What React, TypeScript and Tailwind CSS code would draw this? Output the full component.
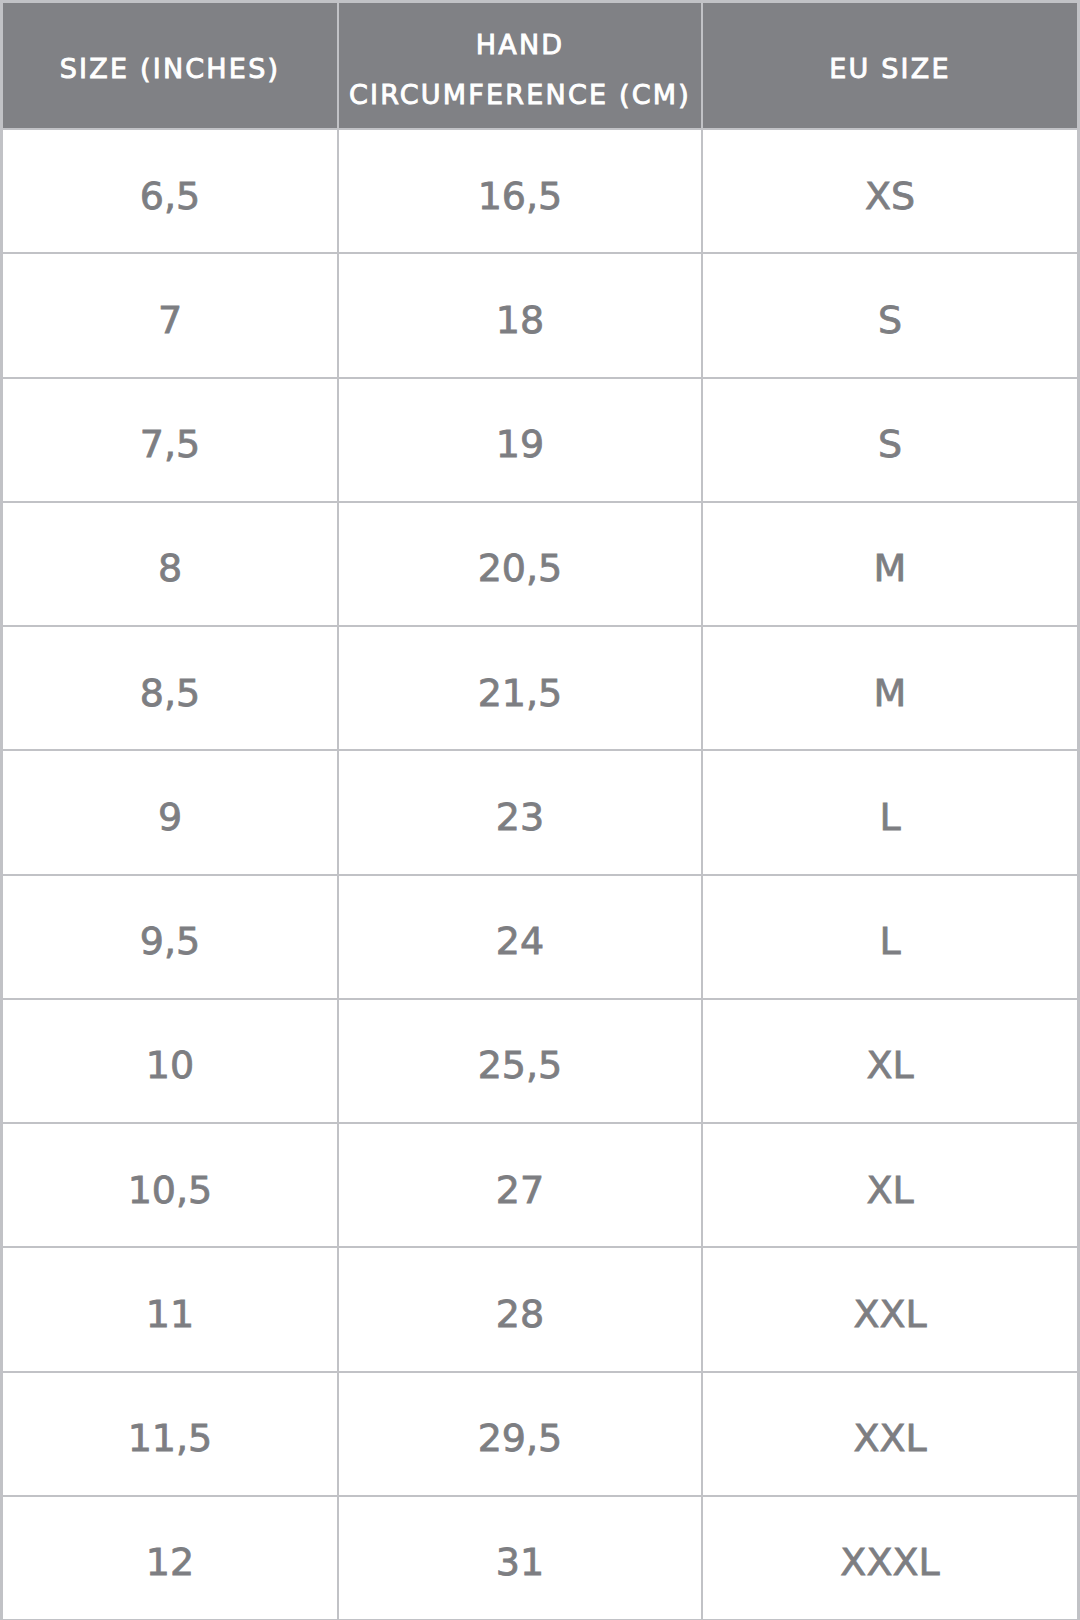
import React from 'react';

const rows: [string, string, string][] = [
  ['6,5', '16,5', 'XS'],
  ['7', '18', 'S'],
  ['7,5', '19', 'S'],
  ['8', '20,5', 'M'],
  ['8,5', '21,5', 'M'],
  ['9', '23', 'L'],
  ['9,5', '24', 'L'],
  ['10', '25,5', 'XL'],
  ['10,5', '27', 'XL'],
  ['11', '28', 'XXL'],
  ['11,5', '29,5', 'XXL'],
  ['12', '31', 'XXXL'],
];

const head =
  'bg-[#808185] flex items-center justify-center pt-[8px] text-white text-[27px] font-normal tracking-[2.2px] [-webkit-text-stroke:0.9px_white]';

export default function App() {
  return (
    <div
      className="w-[1080px] h-[1620px] bg-[#c1c2c6] pt-[3px] px-[3px] pb-[1px] grid grid-cols-[334px_362px_374px] grid-rows-[125px_repeat(12,1fr)] gap-[2px]"
      style={{ fontFamily: '"DejaVu Sans", "Noto Sans", sans-serif' }}
    >
      {/* header */}
      <div className={head}>SIZE (INCHES)</div>
      <div className={head + ' flex-col leading-[50px]'}>
        <span>HAND</span>
        <span>CIRCUMFERENCE (CM)</span>
      </div>
      <div className={head}>EU SIZE</div>

      {/* rows */}
      {rows.map((r, i) => (
        <React.Fragment key={i}>
          {r.map((c, j) => (
            <div
              key={j}
              className="bg-white flex items-center justify-center pt-[10px] text-[#7d7e82] text-[38px] font-normal [-webkit-text-stroke:0.8px_#7d7e82]"
            >
              {c}
            </div>
          ))}
        </React.Fragment>
      ))}
    </div>
  );
}
